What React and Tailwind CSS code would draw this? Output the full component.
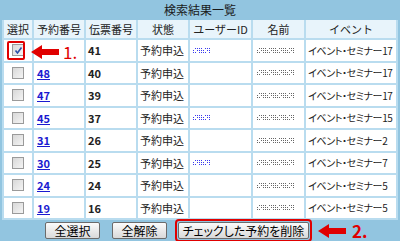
import React from "react";

const rows = [
  { no: "41", slip: "41", id: true, ev: "17", checked: true },
  { no: "48", slip: "40", id: false, ev: "17" },
  { no: "47", slip: "39", id: false, ev: "17" },
  { no: "45", slip: "37", id: true, ev: "15" },
  { no: "31", slip: "26", id: false, ev: "2" },
  { no: "30", slip: "25", id: true, ev: "7" },
  { no: "24", slip: "24", id: false, ev: "5" },
  { no: "19", slip: "16", id: false, ev: "5" },
];

const headers = ["選択", "予約番号", "伝票番号", "状態", "ユーザーID", "名前", "イベント"];

const Check = ({ checked }) => (
  <span className="flex h-[12px] w-[12px] items-center justify-center border border-[#9a9a9a] bg-gradient-to-br from-[#d8d8d8] to-[#f4f4f4]">
    {checked && (
      <svg width="9" height="9" viewBox="0 0 9 9">
        <path d="M1.5 4.5 L3.5 7 L7.5 1.5" stroke="#2a4fa8" strokeWidth="1.6" fill="none" />
      </svg>
    )}
  </span>
);

const Dots = ({ color, count }) => (
  <span className="flex flex-col gap-[1px]">
    {[0, 1, 2].map((r) => (
      <span key={r} className="flex gap-[1px]">
        {Array.from({ length: count }).map((_, i) => (
          <span
            key={i}
            className={`h-[1px] w-[1px] ${color} ${(i * 7 + r * 3) % 5 === 0 ? "opacity-0" : ""}`}
          />
        ))}
      </span>
    ))}
  </span>
);

const Arrow = () => (
  <svg width="28" height="14" viewBox="0 0 28 14">
    <path d="M0 7 L11 0 L11 4 L28 4 L28 10 L11 10 L11 14 Z" fill="#e00000" />
  </svg>
);

const Btn = ({ children, className = "" }) => (
  <button
    className={`h-[17px] whitespace-nowrap rounded-[2px] border border-[#6b6b6b] bg-gradient-to-b from-[#fbfbfb] to-[#d9d9d9] text-[12px] leading-none text-black [font-feature-settings:'palt'] ${className}`}
  >
    {children}
  </button>
);

export default function App() {
  return (
    <div
      className="relative h-[241px] w-[400px] overflow-hidden bg-[#92c5e0] text-[11px] text-[#222]"
      style={{ fontFamily: '"Noto Sans CJK JP", "Noto Sans", sans-serif' }}
    >
      <div className="flex h-[20px] items-center justify-center text-[12px] text-[#1a1a1a]">
        検索結果一覧
      </div>
      <div className="mx-[2px] grid grid-cols-[28px_50px_50px_50px_61px_51px_1fr] gap-[2px] border-2 border-t-0 border-[#b9dcef] bg-[#b9dcef]">
        {headers.map((h) => (
          <div key={h} className="flex h-[18px] items-center justify-center whitespace-nowrap bg-[#e8f4fb]">
            {h}
          </div>
        ))}
        {rows.map((r, i) => (
          <React.Fragment key={i}>
            <div className="flex h-[20.5px] items-center justify-center bg-white">
              <Check checked={r.checked} />
            </div>
            <div className="flex items-center bg-white pl-[3px]">
              <span className="font-bold text-[#1a1ad0] underline">{r.checked ? "" : r.no}</span>
            </div>
            <div className="flex items-center bg-white pl-[2px] font-bold">{r.slip}</div>
            <div className="flex items-center whitespace-nowrap bg-white pl-[2px]">予約申込</div>
            <div className="flex items-center bg-white pl-[3px]">
              {r.id && <Dots color="bg-[#3a3aee]" count={9} />}
            </div>
            <div className="flex items-center bg-white pl-[4px]">
              <Dots color="bg-[#666]" count={19} />
            </div>
            <div className="flex items-center overflow-hidden whitespace-nowrap bg-white pl-[2px] text-[10px] tracking-[-0.4px] [font-feature-settings:'palt']">
              イベント・セミナー{r.ev}
            </div>
          </React.Fragment>
        ))}
      </div>
      <div className="flex h-[21px] items-center pl-[45px]">
        <Btn className="w-[55px]">全選択</Btn>
        <Btn className="ml-[12px] w-[55px]">全解除</Btn>
        <div className="ml-[8px] flex h-[23px] items-center rounded-[4px] border-2 border-[#e00000] px-[1px]">
          <Btn className="w-[131px]">チェックした予約を削除</Btn>
        </div>
        <div className="ml-[6px] flex items-center gap-[6px]">
          <Arrow />
          <span className="text-[17px] font-bold leading-none text-[#e00000]">2.</span>
        </div>
      </div>
      <div className="absolute left-[7px] top-[41px] h-[19px] w-[18px] rounded-[2px] border-2 border-[#e00000]" />
      <div className="absolute left-[31px] top-[43px] flex items-center gap-[4px]">
        <Arrow />
        <span className="text-[17px] leading-none text-[#e00000]">1.</span>
      </div>
    </div>
  );
}
